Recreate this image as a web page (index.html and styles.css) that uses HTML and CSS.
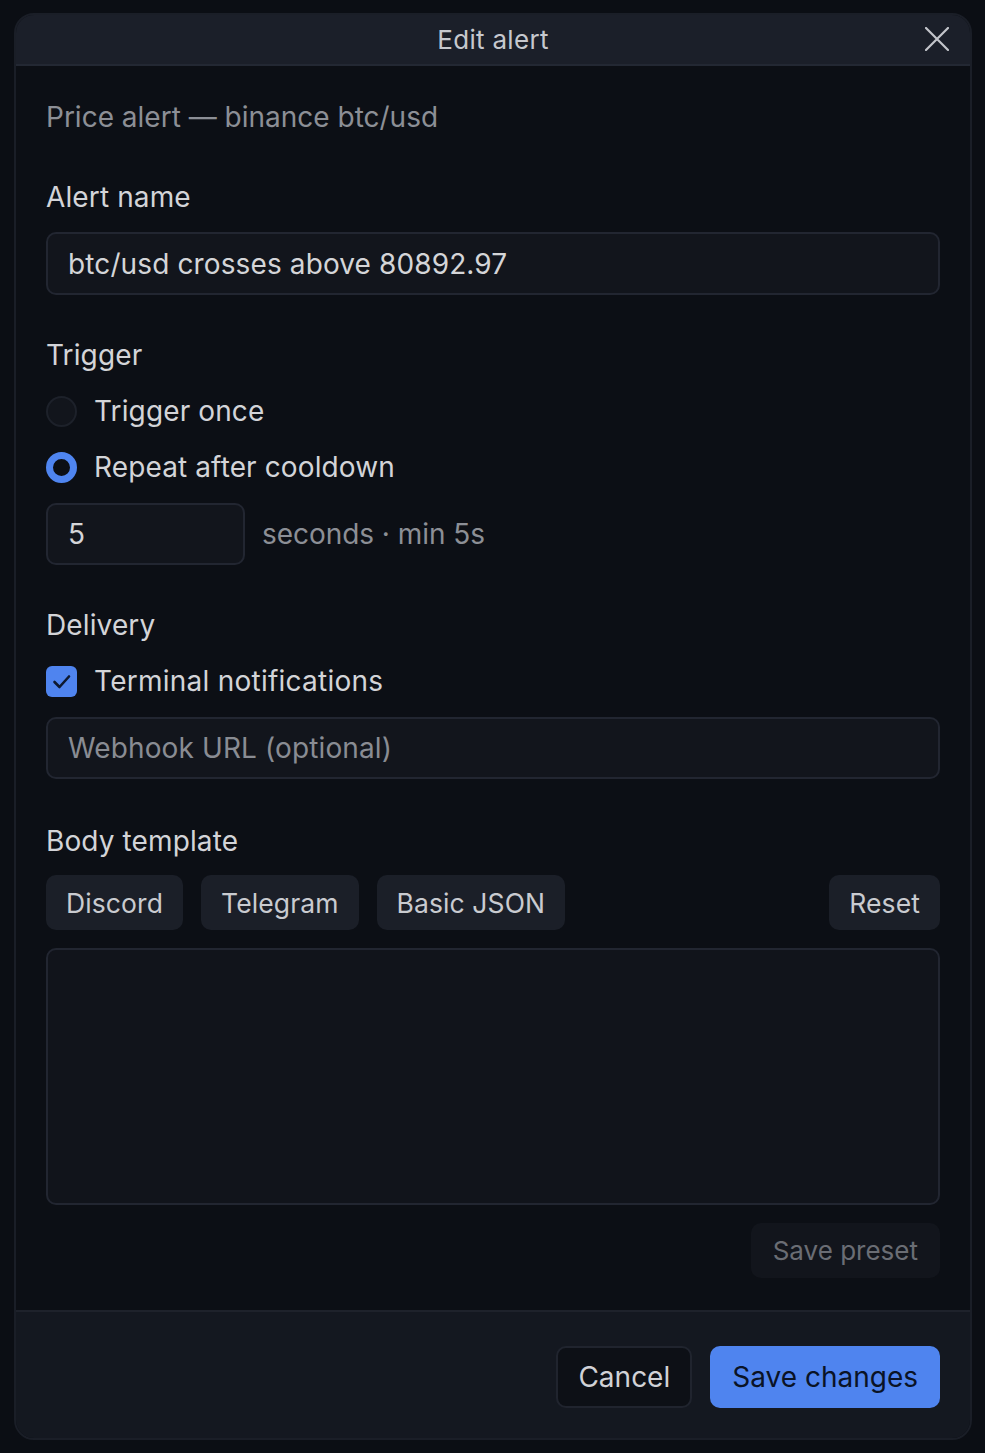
FILE: index.html
```html
<!DOCTYPE html>
<html lang="en">
<head>
<meta charset="utf-8">
<title>Edit alert</title>
<link rel="stylesheet" href="styles.css">
</head>
<body>
<div class="dialog">
  <div class="header">
    <div class="title">Edit alert</div>
    <button class="close" aria-label="Close">
      <svg width="24" height="24" viewBox="0 0 24 24"><path d="M1 1 L23 23 M23 1 L1 23" stroke="#c3c5cb" stroke-width="2.2" stroke-linecap="round" fill="none"/></svg>
    </button>
  </div>
  <div class="content">
    <div class="subtitle">Price alert — binance btc/usd</div>

    <div class="field f-name">
      <div class="label">Alert name</div>
      <div class="input">btc/usd crosses above 80892.97</div>
    </div>

    <div class="field f-trigger">
      <div class="label">Trigger</div>
      <div class="options">
        <div class="option"><span class="radio"></span><span>Trigger once</span></div>
        <div class="option"><span class="radio on"></span><span>Repeat after cooldown</span></div>
      </div>
      <div class="cooldown">
        <div class="input small">5</div>
        <span class="muted">seconds · min 5s</span>
      </div>
    </div>

    <div class="field f-delivery">
      <div class="label">Delivery</div>
      <div class="option"><span class="check"><svg width="31" height="31" viewBox="0 0 31 31"><path d="M8.5 16 L13.5 21 L23 10.5" stroke="#0e1930" stroke-width="2.6" stroke-linecap="round" stroke-linejoin="round" fill="none"/></svg></span><span class="wide">Terminal notifications</span></div>
      <div class="input placeholder">Webhook URL (optional)</div>
    </div>

    <div class="field f-body">
      <div class="label">Body template</div>
      <div class="presets">
        <button class="chip">Discord</button>
        <button class="chip">Telegram</button>
        <button class="chip">Basic JSON</button>
        <span class="spacer"></span>
        <button class="chip">Reset</button>
      </div>
      <div class="textarea"></div>
      <div class="preset-row"><button class="chip disabled">Save preset</button></div>
    </div>
  </div>
  <div class="footer">
    <button class="btn cancel">Cancel</button>
    <button class="btn primary">Save changes</button>
  </div>
</div>
</body>
</html>
```
FILE: styles.css
```css
* { box-sizing: border-box; }
html, body { margin: 0; background: #0b0e14; }
body {
  padding: 13px 13px 13px 14px;
  font-family: Inter, "Liberation Sans", sans-serif;
  font-size: 28px;
  line-height: 34px;
  letter-spacing: 0.12px;
  color: #d0d1d5;
}
button { font-family: inherit; font-size: inherit; line-height: inherit; letter-spacing: inherit; border: none; margin: 0; cursor: pointer; }
.dialog {
  width: 958px;
  height: 1427px;
  border: 2px solid #1a1e27;
  border-radius: 20px;
  background: #0c0f15;
  overflow: hidden;
  display: flex;
  flex-direction: column;
}
.header {
  height: 51px;
  flex: none;
  background: #1b1f29;
  border-bottom: 2px solid #232833;
  display: flex;
  align-items: center;
  justify-content: center;
  position: relative;
}
.title { font-size: 26px; color: #c6c8ce; letter-spacing: 0.3px; }
.close {
  position: absolute;
  right: 21px;
  top: 12px;
  background: none;
  padding: 0;
  width: 24px;
  height: 24px;
}
.close svg { display: block; }
.content {
  flex: 1;
  padding: 34px 30px 32px 30px;
  display: flex;
  flex-direction: column;
}
.subtitle { color: #8c8f96; letter-spacing: 0; }
.field { display: flex; flex-direction: column; }
.f-name { margin-top: 46px; }
.f-trigger { margin-top: 43px; }
.f-delivery { margin-top: 43px; }
.f-body { margin-top: 45px; }
.label { color: #d3d4d8; }
.input {
  height: 63px;
  margin-top: 18px;
  background: #12151c;
  border: 2px solid #222631;
  border-radius: 10px;
  padding: 0 20px;
  display: flex;
  align-items: center;
  color: #d4d5d8;
}
.input.placeholder { color: #898c93; margin-top: 19px; height: 62px; }
.options { display: flex; flex-direction: column; gap: 22px; margin-top: 22px; }
.option { display: flex; align-items: center; gap: 17px; color: #d3d4d8; }
.option .wide { letter-spacing: 0.25px; }
.f-delivery .option { margin-top: 22px; }
.radio {
  width: 31px; height: 31px; flex: none;
  border-radius: 50%;
  background: #12151c;
  border: 2px solid #1d212a;
}
.radio.on { background: #0c0f15; border: 7px solid #4f85f0; }
.check {
  width: 31px; height: 31px; flex: none;
  border-radius: 6px;
  background: #4f84ef;
}
.check svg { display: block; }
.cooldown { display: flex; align-items: center; gap: 17px; margin-top: 19px; }
.input.small { width: 199px; height: 62px; margin-top: 0; }
.muted { color: #8c8f96; letter-spacing: -0.05px; }
.presets { display: flex; gap: 18px; margin-top: 17px; }
.spacer { flex: 1; }
.chip {
  height: 55px;
  padding: 0 20px;
  border-radius: 10px;
  background: #1b1f28;
  color: #c9cbd0;
  font-size: 26.5px;
  letter-spacing: 0.1px;
}
.textarea {
  height: 257px;
  margin-top: 18px;
  background: #11141b;
  border: 2px solid #222631;
  border-radius: 10px;
}
.preset-row { display: flex; justify-content: flex-end; margin-top: 18px; }
.chip.disabled { background: #12151c; color: #6a6d74; padding: 0 22px; font-size: 26px; letter-spacing: 0; }
.footer {
  flex: none;
  height: 130px;
  background: #141820;
  border-top: 2px solid #1e222b;
  display: flex;
  justify-content: flex-end;
  align-items: flex-start;
  gap: 18px;
  padding: 34px 30px 0 0;
}
.btn { height: 62px; border-radius: 10px; padding: 0 21px; }
.cancel { background: #0d1016; border: 2px solid #20242e; color: #d1d2d6; padding: 0 20px; letter-spacing: 0; }
.primary { background: #4f84ef; color: #0a1326; padding: 0 22px; letter-spacing: 0; }
```
